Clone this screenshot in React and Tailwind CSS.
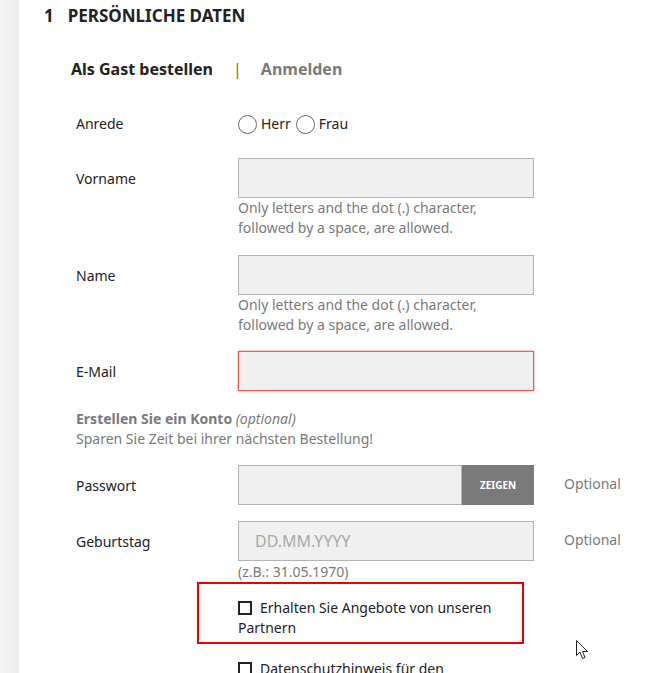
import { useState } from "react";

function Field({ label, children, note, height = "h-[40px]" }) {
    return (
        <div className="grid grid-cols-[162px_296px_30px_auto] items-center">
            <div className="text-[14px] text-[#222]">{label}</div>
            <div className={height}>{children}</div>
            <div />
            <div className="text-[14px] text-[#7a7a7a] -mt-[4px]">{note}</div>
        </div>
    );
}

function Help({ children }) {
    return <p className="ml-[162px] text-[14px] leading-[20px] text-[#7a7a7a] w-[296px]">{children}</p>;
}

function Radio({ label }) {
    return (
        <label className="flex items-center gap-[4px]">
            <span className="w-[19px] h-[19px] rounded-full border-[1.5px] border-[#666] bg-white" />
            <span>{label}</span>
        </label>
    );
}

function App() {
    const [salutation] = useState(null);

    return (
        <div className="relative flex min-h-[673px] h-[673px] overflow-hidden bg-white text-[#222]" style={{ fontFamily: '"Noto Sans", "Open Sans", sans-serif' }}>
            <div className="w-[19px] shrink-0 bg-gradient-to-r from-[#f5f5f5] to-[#ececec]" />

            <div className="flex-1">
                <h2 className="pl-[25px] pt-[4px] flex gap-[14px] text-[17px] leading-[24px] font-bold uppercase text-[#222]">
                    <span>1</span>
                    <span>Persönliche Daten</span>
                </h2>

                <div className="mt-[29px] pl-[52px] flex items-center text-[16px] leading-[24px] font-bold">
                    <span className="text-[#222]">Als Gast bestellen</span>
                    <span className="ml-[20px] font-normal text-[#a8561a]">|</span>
                    <span className="ml-[19px] text-[#7a7a7a]">Anmelden</span>
                </div>

                <div className="pl-[57px]">
                    <div className="mt-[33px] grid grid-cols-[162px_auto] items-center text-[14px] leading-[20px]">
                        <div>Anrede</div>
                        <div className="flex items-center gap-[5px]" data-value={salutation}>
                            <Radio label="Herr" />
                            <Radio label="Frau" />
                        </div>
                    </div>

                    <div className="mt-[24px]">
                        <Field label="Vorname">
                            <input className="w-full h-full bg-[#f0f0f0] border border-[#b3b3b3] outline-none px-[16px]" />
                        </Field>
                        <Help>Only letters and the dot (.) character, followed by a space, are allowed.</Help>
                    </div>

                    <div className="mt-[17px]">
                        <Field label="Name">
                            <input className="w-full h-full bg-[#f0f0f0] border border-[#b3b3b3] outline-none px-[16px]" />
                        </Field>
                        <Help>Only letters and the dot (.) character, followed by a space, are allowed.</Help>
                    </div>

                    <div className="mt-[16px]">
                        <Field label="E-Mail">
                            <input className="w-full h-full bg-[#f0f0f0] border border-[#f05858] shadow-[0_0_2px_#f07070] outline-none px-[16px]" />
                        </Field>
                    </div>

                    <div className="mt-[18px] text-[14px] leading-[20px] text-[#7a7a7a]">
                        <p>
                            <span className="font-bold">Erstellen Sie ein Konto</span> <em>(optional)</em>
                        </p>
                        <p>Sparen Sie Zeit bei ihrer nächsten Bestellung!</p>
                    </div>

                    <div className="mt-[16px]">
                        <Field label="Passwort" note="Optional">
                            <div className="flex h-full">
                                <input type="password" className="flex-1 min-w-0 h-full bg-[#f0f0f0] border border-[#b3b3b3] outline-none px-[16px]" />
                                <button className="w-[72px] h-full bg-[#7a7a7a] text-white text-[10px] font-bold uppercase">Zeigen</button>
                            </div>
                        </Field>
                    </div>

                    <div className="mt-[16px]">
                        <Field label="Geburtstag" note="Optional">
                            <input placeholder="DD.MM.YYYY" className="w-full h-full bg-[#f0f0f0] border border-[#b3b3b3] outline-none px-[16px] text-[16px] placeholder:text-[#a8a8a8]" />
                        </Field>
                        <p className="ml-[162px] text-[14px] leading-[20px] text-[#7a7a7a] mt-[1px]">(z.B.: 31.05.1970)</p>
                    </div>

                    <div className="ml-[121px] w-[327px] h-[62px] border-2 border-[#ee0000] pl-[39px] pt-[14px] text-[14px] leading-[20px] text-[#222]">
                        <label className="block w-[260px]">
                            <span className="inline-block align-[-2px] w-[14px] h-[14px] border-2 border-[#222] mr-[8px]" />
                            Erhalten Sie Angebote von unseren Partnern
                        </label>
                    </div>

                    <div className="mt-[15px] ml-[162px] text-[14px] leading-[20px] text-[#222]">
                        <span className="inline-block align-[-2px] w-[14px] h-[14px] border-2 border-[#222] mr-[8px]" />
                        Datenschutzhinweis für den
                    </div>
                </div>
            </div>

            <svg className="absolute left-[576px] top-[640px]" width="13" height="20" viewBox="0 0 13 20">
                <path d="M0.5 0.5 L0.5 15.5 L4 12 L6.5 18.5 L9 17.5 L6.5 11.5 L11.5 11.5 Z" fill="white" stroke="#222" strokeWidth="1" strokeLinejoin="round" />
            </svg>
        </div>
    );
}

export default App;
